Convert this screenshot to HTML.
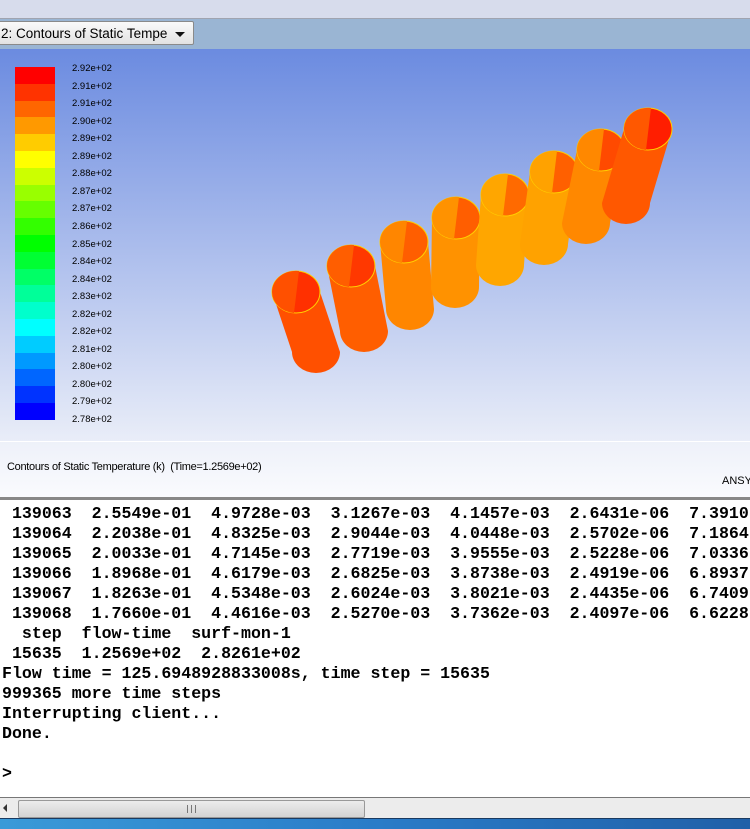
<!DOCTYPE html>
<html><head><style>
*{margin:0;padding:0}
body{width:750px;height:828px;overflow:hidden;position:relative;background:#fff;font-family:"Liberation Sans",sans-serif}
.top{position:absolute;left:0;top:0;width:750px;height:18px;background:#d7dcec;border-bottom:1px solid #a0a4b0}
.tb{position:absolute;left:0;top:19px;width:750px;height:30px;background:#9ab5d3}
.dd{position:absolute;left:-2px;top:21px;width:196px;height:24px;background:linear-gradient(#fafafa,#e2e2e2);border:1px solid #8a8a8a;border-radius:2px;font-size:13.5px;line-height:24px;padding-left:2px;box-sizing:border-box}
.dd i{position:absolute;right:8px;top:10px;border:5px solid transparent;border-top:5px solid #111;border-bottom:0}
.gfx{position:absolute;left:0;top:49px;width:750px;height:392px;background:linear-gradient(#6b8be0,#e9edf8)}
.cap{position:absolute;left:0;top:441px;width:750px;height:56px;background:linear-gradient(#eef1f9,#fafbfe);border-top:1px solid #fff}
.leg{position:absolute;left:15px;width:40px;height:16.9px}
.lab{position:absolute;left:72px;font-size:9.5px;color:#000}
.con{position:absolute;left:0;top:497px;width:750px;height:300px;border-top:3px solid #888;background:#fff;font-family:"Liberation Mono",monospace;font-size:16.6px;line-height:20px;white-space:pre;color:#000;font-weight:bold}
.sb{position:absolute;left:0;top:797px;width:750px;height:21px;background:#ececec;border-top:1px solid #777}
.th{position:absolute;left:18px;top:2px;width:345px;height:16px;background:linear-gradient(#ececec,#d3d3d3);border:1px solid #999;border-radius:2px}
.task{position:absolute;left:0;top:818px;width:750px;height:10px;background:linear-gradient(90deg,#3a9ad8,#2a7cc8,#2060a8);border-top:1px solid #1a3a60}
</style></head><body>
<div class="top"></div>
<div class="tb"></div>
<div class="dd">2: Contours of Static Tempe<i></i></div>
<div class="gfx"></div>
<div id="legend"></div>
<svg style="position:absolute;left:0;top:0" width="750" height="500">
<g id="cyl"></g>
</svg>
<div class="cap"><div style="position:absolute;left:7px;top:19px;font-size:11px;letter-spacing:-0.3px">Contours of Static Temperature (k)&nbsp; (Time=1.2569e+02)</div><div style="position:absolute;left:722px;top:33px;font-size:11px">ANSY</div></div>
<div class="con"><div style="position:absolute;left:2px;top:4px"> 139063  2.5549e-01  4.9728e-03  3.1267e-03  4.1457e-03  2.6431e-06  7.3910
 139064  2.2038e-01  4.8325e-03  2.9044e-03  4.0448e-03  2.5702e-06  7.1864
 139065  2.0033e-01  4.7145e-03  2.7719e-03  3.9555e-03  2.5228e-06  7.0336
 139066  1.8968e-01  4.6179e-03  2.6825e-03  3.8738e-03  2.4919e-06  6.8937
 139067  1.8263e-01  4.5348e-03  2.6024e-03  3.8021e-03  2.4435e-06  6.7409
 139068  1.7660e-01  4.4616e-03  2.5270e-03  3.7362e-03  2.4097e-06  6.6228
  step  flow-time  surf-mon-1
 15635  1.2569e+02  2.8261e+02
Flow time = 125.6948928833008s, time step = 15635
999365 more time steps
Interrupting client...
Done.

&gt;</div></div>
<div class="sb"><div style="position:absolute;left:3px;top:6px;border:4px solid transparent;border-right:4px solid #333;border-left:0"></div><div class="th"><div style="position:absolute;left:168px;top:4px;width:7px;height:8px;border-left:1px solid #777;border-right:1px solid #777"><div style="margin-left:3px;width:1px;height:8px;background:#777"></div></div></div></div>
<div class="task"></div>
<script>
var labs=["2.92e+02","2.91e+02","2.91e+02","2.90e+02","2.89e+02","2.89e+02","2.88e+02","2.87e+02","2.87e+02","2.86e+02","2.85e+02","2.84e+02","2.84e+02","2.83e+02","2.82e+02","2.82e+02","2.81e+02","2.80e+02","2.80e+02","2.79e+02","2.78e+02"];
var h="";
for(var i=0;i<21;i++){var y=67+i*16.8;var hue=i*12;h+='<div class="leg" style="top:'+y+'px;background:hsl('+hue+',100%,50%)"></div><div class="lab" style="top:'+(63+i*17.55)+'px">'+labs[i]+'</div>';}
document.getElementById("legend").innerHTML=h;
var c=[[296,292,316,352,"#ff5000","#ff3000"],[351,266,364,331,"#ff5e00","#ff3800"],[404,242,410,309,"#ff8600","#ff5e00"],[456,218,455,287,"#ff9200","#ff5e00"],[505,195,500,265,"#ffa600","#ff6a00"],[554,172,544,244,"#ffa200","#ff6000"],[601,150,586,223,"#ff8800","#ff4a00"],[648,129,626,203,"#ff5800","#ff1e00"]];
var s="";var r=24,ry=21;
c.forEach(function(a){
s+='<path d="M'+(a[0]-r)+' '+a[1]+' L'+(a[2]-r)+' '+a[3]+' A'+r+' '+ry+' 0 0 0 '+(a[2]+r)+' '+a[3]+' L'+(a[0]+r)+' '+a[1]+' Z" fill="'+a[4]+'"/>';
s+='<ellipse cx="'+a[0]+'" cy="'+a[1]+'" rx="'+r+'" ry="'+ry+'" fill="'+a[5]+'" stroke="#ffd000" stroke-width="1"/>';
s+='<path d="M'+(a[0]-r)+' '+a[1]+' A'+r+' '+ry+' 0 0 1 '+(a[0]+3)+' '+(a[1]-ry)+' L'+(a[0]-2)+' '+(a[1]+ry)+' A'+r+' '+ry+' 0 0 1 '+(a[0]-r)+' '+a[1]+'Z" fill="'+a[4]+'"/>';
});
document.getElementById("cyl").innerHTML=s;
</script>
</body></html>
